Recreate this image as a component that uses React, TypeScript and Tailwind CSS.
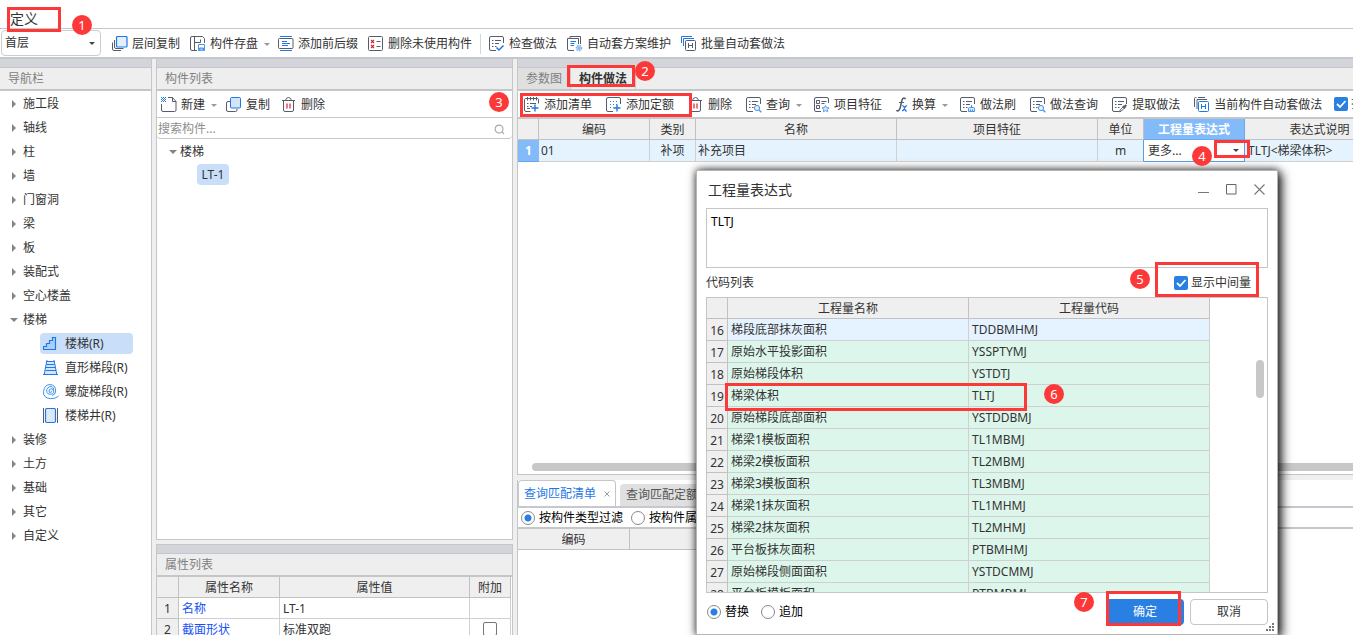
import type { ReactNode } from "react";

const INK = "#555c6c";
const BLUE = "#1f78e6";

interface IconProps {
  children: ReactNode;
}

function Icon({ children }: IconProps) {
  return (
    <svg className="h-4 w-4 shrink-0" viewBox="0 0 16 16" fill="none" stroke={INK}>
      {children}
    </svg>
  );
}

// Page outline that is left open in the bottom right corner for a small mark
const openPage = <path d="M14.500 7V2q0-1.500-1.500-1.500H2Q.5.500.5 2v11Q.5 14.500 2 14.500h5" />;
const pageLines = <path d="M3 4.500h1.500M6 4.500h6M3 7.500h1.500M6 7.500h4M3 10.500h1.500M6 10.500h1.500" />;
const plus = <path d="M11 7.500v7M7.500 11h7" stroke={BLUE} strokeWidth="1.400" />;
const lens = (
  <g stroke="#4a93ec">
    <circle cx="11" cy="11" r="2.600" fill="#e3effd" />
    <path d="M13 13l2.300 2.300" strokeWidth="1.300" />
  </g>
);

const icons = {
  layerCopy: (
    <Icon>
      <rect x="4.500" y=".5" width="10.500" height="10.500" rx="1" fill="#e3effd" stroke={BLUE} strokeWidth="1.200" />
      <path d="M2.500 4v7q0 1.500 1.500 1.500h7.500M.5 6.500V13q0 1.500 1.500 1.500h7" />
    </Icon>
  ),
  save: (
    <Icon>
      <path d="M7 14.500H2Q.5 14.500.5 13V2Q.5.500 2 .5h10.500l2 2V7" />
      <path d="M4.500.500v14M4.500 6.500h6M10.500 3.500v3" />
      <path d="M8.500 8.500h6v6h-6z" fill="#fff" stroke="#4a93ec" />
      <path d="M9.500 14.500v-2.500h4v2.500" fill="#8dbbf5" stroke="#4a93ec" />
    </Icon>
  ),
  prefix: (
    <Icon>
      <path d="M2 .5h12M2 14.500h12" stroke={BLUE} />
      <rect x=".5" y="2.500" width="14.500" height="10" rx="1" />
      <path d="M4 5.500h5M4 7.500h8M4 9.500h6" stroke={BLUE} />
    </Icon>
  ),
  removeUnused: (
    <Icon>
      <rect x=".5" y=".5" width="14" height="14" rx="1" />
      <path d="M3 4l3 3M6 4L3 7M3 9l3 3M6 9l-3 3" stroke="#d9222a" strokeWidth="1.100" />
      <path d="M8.500 5.500h4M8.500 10.500h4" />
    </Icon>
  ),
  check: (
    <Icon>
      {openPage}
      {pageLines}
      <path d="M7.500 11.500L10 14l4.500-4.500" stroke={BLUE} strokeWidth="1.500" />
    </Icon>
  ),
  scheme: (
    <Icon>
      <path d="M3 2V.5h10.500V8M7 14.500H2Q.5 14.500.5 13V2.500h11V8" />
      <path d="M3.500 5.500H9M3.500 7.500h4M3.500 9.500H7" stroke={BLUE} />
      <circle cx="12" cy="12" r="2.600" fill="#cfe2fb" stroke="#7db0f1" strokeWidth="1.400" strokeDasharray="1.600 .9" />
      <circle cx="12" cy="12" r="1" stroke="#6aa5ef" />
    </Icon>
  ),
  batch: (
    <Icon>
      <path d="M.5 7V.5H11M2.500 10V2.500h10.500" stroke={BLUE} />
      <rect x="4.500" y="4.500" width="10" height="10" rx="1" />
      <path d="M7.500 7v5M11.500 7v5M7.500 9.500h4" />
    </Icon>
  ),
  create: (
    <Icon>
      <path d="M7 .5h4.500l3.500 4V13q0 1.500-1.500 1.500H2Q.5 14.500.5 13V7M11.500.500v4H15" />
      <path d="M0 .5h5M0 2.500h5M0 4.500h5" stroke={BLUE} strokeDasharray="1 1" />
      <path d="M1 1.500h4M1 3.500h4" stroke={BLUE} strokeDasharray="1 1" />
    </Icon>
  ),
  copy: (
    <Icon>
      <path d="M4 4.500H2Q.5 4.500.5 6v7q0 1.500 1.500 1.500h7.500Q11 14.500 11 13v-1" />
      <rect x="4.500" y=".5" width="10" height="10.500" rx="1" fill="#d3e4fa" stroke={BLUE} />
    </Icon>
  ),
  trash: (
    <Icon>
      <path d="M1 3.500h13M4.500 3.500Q5 .5 7.500.500t3 3M2.500 3.500V13q0 1.500 1.500 1.500h7q1.500 0 1.500-1.500V3.500" />
      <path d="M6 6.500v5M9 6.500v5" stroke="#d9222a" strokeWidth="1.200" />
    </Icon>
  ),
  addList: (
    <Icon>
      <path d="M14.500 6.500v-4q0-1-1-1H1.500q-1 0-1 1V13q0 1.500 1.500 1.500h4.500M3.500 0v3.500M6.500 0v3.500M9.500 0v3.500M12.500 0v3.500M3 6.500h1.500M6 6.500h6M3 9.500h1.500M6 9.500h2M3 11.500h3" />
      {plus}
    </Icon>
  ),
  addQuota: (
    <Icon>
      {openPage}
      <path d="M4 4.500h9M4 7.500h7M4 10.500h3.500" stroke={BLUE} strokeDasharray="1 2" />
      {plus}
    </Icon>
  ),
  query: (
    <Icon>
      {openPage}
      {pageLines}
      {lens}
    </Icon>
  ),
  feature: (
    <Icon>
      <path d="M14.500 6V2q0-1.500-1.500-1.500H2Q.5.500.5 2v11Q.5 14.500 2 14.500h5M2.500 3.500h3v3h-3zM2.500 8.500h3v3h-3zM7.500 4.500h5M7.500 6.500h3" />
      <path d="M11.500 8.500l1 2 2.500.3-1.800 1.700.5 2.300-2.200-1.200-2.200 1.200.5-2.300L8 10.800l2.500-.3z" fill="#d9e9fc" stroke="#5c9cec" />
    </Icon>
  ),
  brush: (
    <Icon>
      {openPage}
      {pageLines}
      <path d="M11.500 8v2.500M8.500 14.500v-3q0-1 1-1h4q1 0 1 1v3zM10.500 12.500v2M12.500 12.500v2" fill="#d9e9fc" stroke="#4a93ec" />
    </Icon>
  ),
  extract: (
    <Icon>
      {openPage}
      {pageLines}
      <path d="M7.500 14.800l.8-2 3-3 1.200 1.200-3 3z" />
      <path d="M11 9l2.200 2.200M12.300 10l2-2" strokeWidth="2" />
    </Icon>
  ),
  current: (
    <Icon>
      <path d="M2.500.500H1.500q-1 0-1 1V10M4 .5h7" />
      <path d="M3 12V2.500h10" />
      <rect x="4.500" y="4.500" width="10" height="10" rx="1" stroke={BLUE} fill="#fff" />
      <path d="M7.500 7v5M11.500 7v5M7.500 9.500h4" stroke={BLUE} />
    </Icon>
  ),
  formula: (
    <svg className="h-4 w-3 shrink-0" viewBox="0 0 12 16" fill="none" stroke={INK}>
      <path d="M9.500 2.300Q9 .8 7.800 1 6.300 1.300 5.700 4L4.300 10.500Q3.600 13.500 2 14 1 14.200.6 13" strokeWidth="1.500" />
      <path d="M3 5.500h5" />
      <path d="M6.300 9q1.200-.6 1.800 1l1 3q.5 1.500 1.700.7M11 9q-1-.4-1.800.8L7.800 12.500q-.7 1.500-1.800 1" stroke={BLUE} strokeWidth="1.300" />
    </svg>
  ),
  stairs: (
    <Icon>
      <path d="M.5 13.500v-3h3V7.500h3V4.500h3v-3h3v12z" fill="#a9cffa" stroke={BLUE} strokeWidth="1.200" />
    </Icon>
  ),
  straight: (
    <Icon>
      <path d="M4 1h7l2.500 13h-12z" fill="#d3e6fc" stroke="none" />
      <path d="M4 0L1.200 14.500M11 0l2.800 14.500M4 1.500h7M3.500 4.500h8M3 7.500h9M2.500 10.500h10.500M0 14.500h15" stroke={BLUE} />
    </Icon>
  ),
  spiral: (
    <Icon>
      <path
        d="M7.800 7.200q.8-.5.800.4T7.300 8.600 6 7t2-2.200T10.700 7 7.700 10.200 3.700 7 8 2.500M8 2.500M10.700 7Q10.700 2.500 8 2.500M12.700 7Q12.500.6 7 .6T.6 7.300t7 7.400q4.500.2 7.900-2.500M12.700 7q0 3.500-3.500 4.500"
        stroke="#3f93ee"
      />
    </Icon>
  ),
  well: (
    <Icon>
      <rect x="2.500" y=".5" width="10" height="14" rx="1.500" fill="#dbe9fb" stroke={BLUE} strokeWidth="1.200" />
      <path d="M.5 0v15M14.500 0v15" />
    </Icon>
  ),
};

function Caret({ className = "border-t-[#8a8a8a]" }: { className?: string }) {
  return <span className={`h-0 w-0 border-x-[3px] border-t-[3px] border-x-transparent ${className}`} />;
}

interface Tool {
  icon: ReactNode;
  label: string;
  menu?: boolean;
}

function ToolButton({ icon, label, menu }: Tool) {
  return (
    <button type="button" className="flex shrink-0 items-center gap-1 whitespace-nowrap">
      {icon}
      <span>{label}</span>
      {menu && <Caret className="-mr-0.5 ml-0.5 border-t-[#9a9a9a]" />}
    </button>
  );
}

function PanelHeader({ title }: { title: string }) {
  return (
    <>
      <div className="h-[9px] shrink-0 border-b border-[#c4c6cc] bg-[#d4d5db]" />
      <h2 className="flex h-[23px] shrink-0 items-center border-b-2 border-[#c5c6c8] bg-[#eeeeee] pl-2 text-[#808080]">
        {title}
      </h2>
    </>
  );
}

function CheckBox({ label }: { label: string }) {
  return (
    <label className="flex shrink-0 items-center gap-[3px] whitespace-nowrap">
      <span className="grid h-3.5 w-3.5">
        <input
          type="checkbox"
          defaultChecked
          className="h-3.5 w-3.5 appearance-none rounded-xs bg-[#2a7fe2] [grid-area:1/1]"
        />
        <svg className="pointer-events-none h-3.5 w-3.5 [grid-area:1/1]" viewBox="0 0 14 14" fill="none" stroke="#fff" strokeWidth="1.800">
          <path d="M3 7l3 3 5.500-6" />
        </svg>
      </span>
      {label}
    </label>
  );
}

function Radio({ name, label, checked }: { name: string; label: string; checked?: boolean }) {
  return (
    <label className="flex shrink-0 items-center gap-1 whitespace-nowrap text-black">
      <input
        type="radio"
        name={name}
        defaultChecked={checked}
        className="h-3.5 w-3.5 appearance-none rounded-full border border-[#888888] bg-white checked:bg-[radial-gradient(circle,#2a7fe2_3px,#ffffff_4px)]"
      />
      {label}
    </label>
  );
}

const navBefore = ["施工段", "轴线", "柱", "墙", "门窗洞", "梁", "板", "装配式", "空心楼盖"];
const navAfter = ["装修", "土方", "基础", "其它", "自定义"];
const stairItems = [
  { label: "楼梯(R)", icon: icons.stairs },
  { label: "直形梯段(R)", icon: icons.straight },
  { label: "螺旋梯段(R)", icon: icons.spiral },
  { label: "楼梯井(R)", icon: icons.well },
];

function NavItem({ label }: { label: string }) {
  return (
    <li className="flex h-6 items-center gap-[7px] pl-3">
      <span className="h-0 w-0 border-y-[4px] border-l-[4px] border-y-transparent border-l-[#858585]" />
      {label}
    </li>
  );
}

function Navigator() {
  return (
    <nav className="flex w-[152px] shrink-0 flex-col border-r border-[#c5c6c8] bg-white">
      <PanelHeader title="导航栏" />
      <ul className="pt-px">
        {navBefore.map((label) => (
          <NavItem key={label} label={label} />
        ))}
        <li>
          <div className="flex h-6 items-center gap-[5px] pl-2.5">
            <span className="h-0 w-0 border-x-[4px] border-t-[4px] border-x-transparent border-t-[#858585]" />
            楼梯
          </div>
          <ul className="pl-10">
            {stairItems.map((item, index) => (
              <li key={item.label} className="flex h-6 items-center pb-px">
                <div
                  className={`flex h-[21px] w-[93px] items-center gap-1.5 rounded-sm pl-[3px] whitespace-nowrap ${
                    index === 0 ? "bg-[#c9dff9]" : ""
                  }`}
                >
                  {item.icon}
                  {item.label}
                </div>
              </li>
            ))}
          </ul>
        </li>
        {navAfter.map((label) => (
          <NavItem key={label} label={label} />
        ))}
      </ul>
    </nav>
  );
}

const th = "border-r border-b border-[#c2c2c2] bg-[#efefef] p-0 pt-0.5 font-normal";
const td = "border-r border-b border-[#d0d0d0] p-0";

function ComponentColumn() {
  return (
    <div className="flex w-[357px] shrink-0 flex-col gap-1">
      <section className="flex min-h-0 flex-1 flex-col border border-t-0 border-[#c5c6c8] bg-white">
        <PanelHeader title="构件列表" />
        <div className="flex h-[27px] shrink-0 items-center gap-[11px] border-b border-[#c5c6c8] pt-0.5 pl-1">
          <ToolButton icon={icons.create} label="新建" menu />
          <ToolButton icon={icons.copy} label="复制" />
          <ToolButton icon={icons.trash} label="删除" />
        </div>
        <div className="flex h-[21px] shrink-0 items-center rounded border-b border-[#c5c6c8] pt-0.5 pr-[7px] pl-px">
          <input
            aria-label="搜索构件"
            placeholder="搜索构件..."
            className="min-w-0 flex-1 outline-none placeholder:text-[#8e8e8e]"
          />
          <svg className="h-[11px] w-[11px]" viewBox="0 0 12 12" fill="none" stroke="#a5a5a5" strokeWidth="1.200">
            <circle cx="5.500" cy="5.500" r="4.300" />
            <path d="M8.700 8.700l2.300 2.300" />
          </svg>
        </div>
        <ul className="pt-px">
          <li>
            <div className="flex h-6 items-center gap-0.5 pl-3">
              <span className="h-0 w-0 border-x-[4px] border-t-[4px] border-x-transparent border-t-[#858585]" />
              <span className="pl-px">楼梯</span>
            </div>
            <ul className="pl-10">
              <li className="flex h-6 items-start">
                <span className="flex h-[21px] w-8 items-center justify-center rounded-sm bg-[#c9dff9]">LT-1</span>
              </li>
            </ul>
          </li>
        </ul>
      </section>

      <section className="h-[91px] shrink-0 overflow-hidden border border-b-0 border-[#c5c6c8] bg-white">
        <PanelHeader title="属性列表" />
        <table className="w-[354px] table-fixed border-separate border-spacing-0">
          <colgroup>
            <col className="w-[22px]" />
            <col className="w-[101px]" />
            <col />
            <col className="w-[41px]" />
          </colgroup>
          <thead>
            <tr className="h-[21px]">
              <th className={th} />
              <th className={th}>属性名称</th>
              <th className={th}>属性值</th>
              <th className={th}>附加</th>
            </tr>
          </thead>
          <tbody>
            <tr className="h-[21px]">
              <th className={th}>1</th>
              <td className={`${td} pt-0.5 pl-[3px] text-[#1450f5]`}>名称</td>
              <td className={`${td} pt-0.5 pl-[3px]`}>LT-1</td>
              <td className={td} />
            </tr>
            <tr className="h-[21px]">
              <th className={th}>2</th>
              <td className={`${td} pt-0.5 pl-[3px] text-[#1450f5]`}>截面形状</td>
              <td className={`${td} pt-0.5 pl-[3px]`}>标准双跑</td>
              <td className={td}>
                <input
                  type="checkbox"
                  aria-label="附加 截面形状"
                  className="mx-auto block h-3.5 w-3.5 appearance-none rounded-xs border border-[#777777]"
                />
              </td>
            </tr>
          </tbody>
        </table>
      </section>
    </div>
  );
}

const methodTools: Tool[] = [
  { icon: icons.addList, label: "添加清单" },
  { icon: icons.addQuota, label: "添加定额" },
  { icon: icons.trash, label: "删除" },
  { icon: icons.query, label: "查询", menu: true },
  { icon: icons.feature, label: "项目特征" },
  { icon: icons.formula, label: "换算", menu: true },
  { icon: icons.brush, label: "做法刷" },
  { icon: icons.query, label: "做法查询" },
  { icon: icons.extract, label: "提取做法" },
  { icon: icons.current, label: "当前构件自动套做法" },
];

function MethodTable() {
  const cell = `${td} bg-[#e5f3ff]`;
  return (
    <table className="w-[877px] table-fixed border-separate border-spacing-0">
      <colgroup>
        <col className="w-[21px]" />
        <col className="w-[111px]" />
        <col className="w-[46px]" />
        <col className="w-[201px]" />
        <col className="w-[201px]" />
        <col className="w-[46px]" />
        <col className="w-[101px]" />
        <col className="w-[150px]" />
      </colgroup>
      <thead>
        <tr className="h-[21px]">
          <th className={th} />
          <th className={th}>编码</th>
          <th className={th}>类别</th>
          <th className={th}>名称</th>
          <th className={th}>项目特征</th>
          <th className={th}>单位</th>
          <th className="border-r border-b border-[#6ba8ea] bg-[#82bafa] p-0 pt-0.5 font-bold text-white">工程量表达式</th>
          <th className={th}>表达式说明</th>
        </tr>
      </thead>
      <tbody>
        <tr className="h-[22px]">
          <th className="border-b border-[#6ba8ea] bg-[#82bafa] p-0 font-bold text-white">1</th>
          <td className={`${cell} pl-0.5`}>01</td>
          <td className={`${cell} text-center`}>补项</td>
          <td className={`${cell} pl-0.5`}>补充项目</td>
          <td className={cell} />
          <td className={`${td} border-r-[#5b9fe0] bg-[#e5f3ff] text-center`}>m</td>
          <td className="border-r border-b border-[#5b9fe0] bg-white p-0">
            <div className="flex items-center pr-[5px] pl-1">
              <select aria-label="工程量表达式" className="min-w-0 flex-1 appearance-none outline-none">
                <option>更多...</option>
              </select>
              <Caret className="border-t-[#444444]" />
            </div>
          </td>
          <td className={`${cell} pl-[3px]`}>TLTJ&lt;梯梁体积&gt;</td>
        </tr>
      </tbody>
    </table>
  );
}

function MethodColumn() {
  return (
    <main className="flex min-w-0 flex-1 flex-col gap-[5px] overflow-hidden">
      <section className="flex min-h-0 flex-1 flex-col overflow-hidden border-b border-l border-[#c5c6c8] bg-white">
        <div className="h-[9px] shrink-0 border-b border-[#c4c6cc] bg-[#d4d5db]" />
        <div className="flex h-[23px] shrink-0 border-b-2 border-[#c5c6c8] bg-[#eeeeee]">
          <button type="button" className="border-r border-[#c9c9c9] bg-[#e0e0e0] px-2 text-[#808080]">
            参数图
          </button>
          <button type="button" className="border-r border-[#c9c9c9] px-2 font-bold text-[#333333]">
            构件做法
          </button>
        </div>
        <div className="flex h-7 shrink-0 items-center gap-3.5 border-b-2 border-[#c5c6c8] pt-0.5 pl-1.5">
          {methodTools.map((tool) => (
            <ToolButton key={tool.label} {...tool} />
          ))}
          <div className="-ml-0.5 pb-0.5">
            <CheckBox label="指定计算方式" />
          </div>
        </div>
        <MethodTable />
        <div className="mt-auto mb-[3px] ml-3.5 h-2 shrink-0 rounded-l-full bg-[#c8c8c8]" />
      </section>

      <section className="h-[155px] shrink-0 overflow-hidden border-l border-[#c5c6c8] bg-white">
        <div className="flex h-7 items-end gap-1 border-b-2 border-[#c5c8ce]">
          <button
            type="button"
            className="flex h-[26px] items-center gap-2 rounded-t border border-b-0 border-[#c5c6c8] px-[5px] text-[#1f78e6]"
          >
            查询匹配清单
            <svg className="h-1.5 w-1.5" viewBox="0 0 6 6" stroke="#9a9a9a">
              <path d="M.5.500l5 5M5.500.500l-5 5" />
            </svg>
          </button>
          <button type="button" className="flex h-[22px] items-center rounded-t bg-[#e0e0e0] px-1.5 text-[#555555]">
            查询匹配定额
          </button>
        </div>
        <div className="flex h-[21px] items-center gap-2 border-b-2 border-[#c5c6c8] pl-[3px]">
          <Radio name="filter" label="按构件类型过滤" checked />
          <Radio name="filter" label="按构件属性过滤" />
        </div>
        <table className="w-[312px] table-fixed border-separate border-spacing-0">
          <thead>
            <tr className="h-[21px]">
              <th className={`${th} w-[112px]`}>编码</th>
              <th className={th} />
            </tr>
          </thead>
        </table>
      </section>
    </main>
  );
}

const codes = [
  { id: 16, name: "梯段底部抹灰面积", code: "TDDBMHMJ" },
  { id: 17, name: "原始水平投影面积", code: "YSSPTYMJ" },
  { id: 18, name: "原始梯段体积", code: "YSTDTJ" },
  { id: 19, name: "梯梁体积", code: "TLTJ" },
  { id: 20, name: "原始梯段底部面积", code: "YSTDDBMJ" },
  { id: 21, name: "梯梁1模板面积", code: "TL1MBMJ" },
  { id: 22, name: "梯梁2模板面积", code: "TL2MBMJ" },
  { id: 23, name: "梯梁3模板面积", code: "TL3MBMJ" },
  { id: 24, name: "梯梁1抹灰面积", code: "TL1MHMJ" },
  { id: 25, name: "梯梁2抹灰面积", code: "TL2MHMJ" },
  { id: 26, name: "平台板抹灰面积", code: "PTBMHMJ" },
  { id: 27, name: "原始梯段侧面面积", code: "YSTDCMMJ" },
  { id: 28, name: "平台板模板面积", code: "PTBMBMJ" },
];

function ExpressionDialog() {
  return (
    <div
      role="dialog"
      aria-label="工程量表达式"
      className="absolute top-[170px] left-[696px] w-[582px] border border-[#b5b5b5] bg-white px-[9px] shadow-[0_0_8px_rgba(0,0,0,0.7),4px_3px_10px_rgba(0,0,0,0.75)]"
    >
      <header className="flex h-[37px] items-center pr-[3px] pl-0.5">
        <h2 className="flex-1 text-sm">工程量表达式</h2>
        <div className="flex gap-[17px]">
          <button type="button" aria-label="最小化">
            <svg className="h-[11px] w-[11px]" viewBox="0 0 11 11" stroke="#777777">
              <path d="M0 8.500h11" />
            </svg>
          </button>
          <button type="button" aria-label="最大化">
            <svg className="h-[11px] w-[11px]" viewBox="0 0 11 11" fill="none" stroke="#666666">
              <path d="M.5.500h9.500v9.500H.500z" />
            </svg>
          </button>
          <button type="button" aria-label="关闭">
            <svg className="h-[11px] w-[11px]" viewBox="0 0 11 11" stroke="#777777" strokeWidth="1.100">
              <path d="M.5.500l10 10M10.500.500l-10 10" />
            </svg>
          </button>
        </div>
      </header>
      <textarea
        aria-label="表达式"
        defaultValue="TLTJ"
        className="block h-[60px] w-full resize-none border border-[#c5c5c5] px-1 py-[5px] text-black outline-none"
      />
      <div className="flex h-[29px] items-center justify-between pr-[17px]">
        <span>代码列表</span>
        <CheckBox label="显示中间量" />
      </div>
      <div className="relative h-[296px] overflow-hidden border border-[#c5c5c5]">
        <table className="w-[503px] table-fixed border-separate border-spacing-0">
          <thead>
            <tr className="h-[21px]">
              <th className={`${th} w-[21px]`} />
              <th className={th}>工程量名称</th>
              <th className={th}>工程量代码</th>
            </tr>
          </thead>
          <tbody>
            {codes.map((row) => (
              <tr key={row.id} className={`h-[22px] ${row.id === 16 ? "bg-[#e5f2ff]" : "bg-[#ddf6eb]"}`}>
                <th className={th}>{row.id}</th>
                <td className={`${td} pl-[3px]`}>{row.name}</td>
                <td className={`${td} pl-[3px]`}>{row.code}</td>
              </tr>
            ))}
          </tbody>
        </table>
        <div className="absolute top-[62px] right-[3px] h-[38px] w-2 rounded-full bg-[#c8c8c8]" />
      </div>
      <footer className="flex h-[41px] items-center gap-3 pb-[3px] pl-px">
        <Radio name="mode" label="替换" checked />
        <Radio name="mode" label="追加" />
        <div className="ml-auto flex gap-1.5">
          <button type="button" className="h-[26px] w-[78px] rounded-sm bg-[#2a7fe2] text-white">
            确定
          </button>
          <button type="button" className="h-[26px] w-[78px] rounded-sm border border-[#c5c5c5]">
            取消
          </button>
        </div>
      </footer>
      <svg className="absolute right-[3px] bottom-[3px] h-2 w-2" viewBox="0 0 8 8" fill="#777777">
        <path d="M0 6h2v2H0zM3 6h2v2H3zM6 6h2v2H6zM3 3h2v2H3zM6 3h2v2H6zM6 0h2v2H6z" />
      </svg>
    </div>
  );
}

const steps = [
  { id: 1, box: "left-[7px] top-[7px] w-[54px] h-[25px]", dot: "left-[72px] top-[15px]" },
  { id: 2, box: "left-[567px] top-[65px] w-[68px] h-[22px]", dot: "left-[635px] top-[61px]" },
  { id: 3, box: "left-[520px] top-[93px] w-[172px] h-[24px]", dot: "left-[489px] top-[92px]" },
  { id: 4, box: "left-[1214px] top-[140px] w-[36px] h-[18px]", dot: "left-[1192px] top-[146px]" },
  { id: 5, box: "left-[1155px] top-[262px] w-[104px] h-[35px]", dot: "left-[1130px] top-[269px]" },
  { id: 6, box: "left-[725px] top-[383px] w-[302px] h-[28px]", dot: "left-[1044px] top-[384px]" },
  { id: 7, box: "left-[1106px] top-[591px] w-[75px] h-[35px]", dot: "left-[1074px] top-[592px]" },
];

function StepMarks() {
  return (
    <div className="pointer-events-none">
      {steps.map((step) => (
        <div key={step.id}>
          <div className={`absolute border-3 border-[#fd3838] ${step.box}`} />
          <div
            className={`absolute flex h-5 w-5 items-center justify-center rounded-full bg-[#fd3838] text-[13px] leading-4 text-white ${step.dot}`}
          >
            {step.id}
          </div>
        </div>
      ))}
    </div>
  );
}

export default function App() {
  return (
    <div className="relative flex h-screen flex-col overflow-hidden bg-[#efefef] font-['Noto_Sans','Noto_Sans_CJK_SC',sans-serif] text-xs text-[#333333]">
      <h1 className="flex h-[29px] shrink-0 items-center border-b border-[#c5c6c8] bg-white pt-2.5 pl-2.5 text-sm">
        定义
      </h1>
      <div className="flex h-[30px] shrink-0 items-center gap-2.5 border-b-2 border-[#c5c8ce] bg-white pl-px">
        <div className="mr-px flex h-[26px] w-[100px] shrink-0 items-center rounded border border-[#cccccc] pr-[5px] pl-[3px]">
          <select aria-label="楼层" className="min-w-0 flex-1 appearance-none outline-none">
            <option>首层</option>
          </select>
          <Caret className="border-t-[#444444]" />
        </div>
        <div className="flex items-center gap-2.5 pt-0.5">
          <ToolButton icon={icons.layerCopy} label="层间复制" />
          <ToolButton icon={icons.save} label="构件存盘" menu />
          <ToolButton icon={icons.prefix} label="添加前后缀" />
          <ToolButton icon={icons.removeUnused} label="删除未使用构件" />
          <div className="-mx-0.5 h-5 w-px bg-[#d5d5d5]" />
          <ToolButton icon={icons.check} label="检查做法" />
          <ToolButton icon={icons.scheme} label="自动套方案维护" />
          <ToolButton icon={icons.batch} label="批量自动套做法" />
        </div>
      </div>
      <div className="flex min-h-0 flex-1 gap-1">
        <Navigator />
        <ComponentColumn />
        <MethodColumn />
      </div>
      <ExpressionDialog />
      <StepMarks />
    </div>
  );
}
